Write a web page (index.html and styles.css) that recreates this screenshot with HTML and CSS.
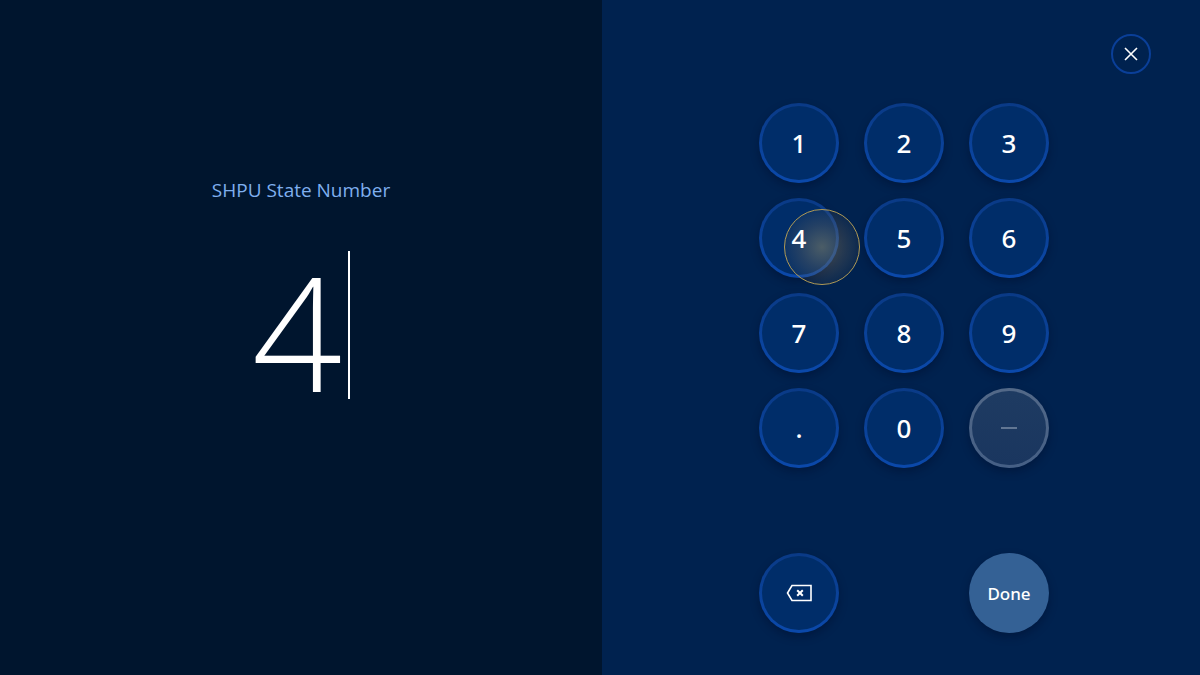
FILE: index.html
```html
<!DOCTYPE html>
<html lang="en">
<head>
    <meta charset="UTF-8">
    <meta name="viewport" content="width=device-width, initial-scale=1.0">
    <title>SHPU State Number</title>
    <link rel="stylesheet" href="styles.css">
</head>
<body>
<main class="screen">
    <section class="entry">
        <label for="stateNumber">SHPU State Number</label>
        <input id="stateNumber" type="text" inputmode="decimal" value="4">
    </section>
    <section class="panel">
        <header class="panel-top">
            <button class="close" type="button" aria-label="Close">
                <svg width="14" height="14" viewBox="0 0 14 14"><path d="M1 1L13 13M13 1L1 13"/></svg>
            </button>
        </header>
        <div class="keypad">
            <button class="key" type="button">1</button>
            <button class="key" type="button">2</button>
            <button class="key" type="button">3</button>
            <button class="key" type="button"><span class="digit">4</span><span class="touch"></span></button>
            <button class="key" type="button">5</button>
            <button class="key" type="button">6</button>
            <button class="key" type="button">7</button>
            <button class="key" type="button">8</button>
            <button class="key" type="button">9</button>
            <button class="key" type="button">.</button>
            <button class="key" type="button">0</button>
            <button class="key" type="button" aria-label="Minus" disabled>
                <svg width="16" height="2" viewBox="0 0 16 2"><path d="M0 1H16"/></svg>
            </button>
        </div>
        <div class="actions">
            <button class="key" type="button" aria-label="Backspace">
                <svg width="26" height="18" viewBox="0 0 26 18">
                    <path d="M6 1.5H25V16.5H6L1.5 9Z"/>
                    <path class="cross" d="M11.2 6.2L16.8 11.8M16.8 6.2L11.2 11.8"/>
                </svg>
            </button>
            <button class="key done" type="button">Done</button>
        </div>
    </section>
</main>
</body>
</html>
```
FILE: styles.css
```css
* {
    box-sizing: border-box;
}
body {
    margin: 0;
    background-color: #00224f;
    font-family: "Noto Sans", "Open Sans", sans-serif;
    color: #fff;
}
.screen {
    display: grid;
    grid-template-columns: 301fr 299fr;
    min-height: 100vh;
}
.entry {
    display: flex;
    flex-direction: column;
    align-items: center;
    padding-top: 176px;
    background-color: #00152e;
}
.entry label {
    font-family: "Open Sans", "Noto Sans", sans-serif;
    font-size: 19px;
    line-height: 28px;
    color: #7fafee;
}
/* the right border is the text cursor */
.entry input {
    width: 98px;
    height: 148px;
    margin-top: 47px;
    padding: 10px 6px 0 0;
    border: 0;
    border-right: 2px solid #fff;
    outline: 0;
    background: none;
    font-family: "Open Sans", "Noto Sans", sans-serif;
    font-size: 158px;
    font-weight: 300;
    line-height: 128px;
    text-align: right;
    color: #fff;
}
.panel {
    padding: 34px 0 42px;
}
.panel-top {
    display: flex;
    justify-content: flex-end;
    padding-right: 49px;
}
button {
    display: flex;
    align-items: center;
    justify-content: center;
    padding: 0;
    border-radius: 50%;
    font-family: inherit;
    color: #fff;
    cursor: pointer;
}
svg {
    fill: none;
    stroke: #fff;
    stroke-width: 1.6;
}
.close {
    width: 40px;
    height: 40px;
    border: 2px solid #0a3f98;
    background-color: #00224f;
}
.keypad,
.actions {
    display: grid;
    grid-template-columns: repeat(3, 80px);
    gap: 15px 25px;
    justify-content: center;
    padding-left: 6px;
}
.keypad {
    margin-top: 29px;
}
.actions {
    margin-top: 85px;
}
.key {
    position: relative;
    width: 80px;
    height: 80px;
    border: 3px solid transparent;
    background: linear-gradient(#002d69, #002d69) padding-box, linear-gradient(#0a3a86, #0b49ab) border-box;
    box-shadow: 0 4px 8px rgba(0, 10, 35, 0.35);
    font-size: 26px;
    font-weight: 500;
}
.key:disabled {
    background: linear-gradient(#1e3b62, #1a365f) padding-box, linear-gradient(#536988, #455f85) border-box;
    cursor: default;
}
.key:disabled svg {
    stroke: #7486a0;
}
.cross {
    stroke-width: 2;
}
.key.done {
    grid-column: 3;
    border: 0;
    background: #346195;
    font-size: 17px;
}
.digit {
    position: relative;
    z-index: 2;
}
/* finger marker over the pressed key */
.touch {
    position: absolute;
    top: 8px;
    left: 22px;
    width: 76px;
    height: 76px;
    border: 1px solid #b09a55;
    border-radius: 50%;
    background: radial-gradient(circle closest-side, rgba(150, 140, 100, 0.5), rgba(120, 110, 90, 0.3) 60%, rgba(110, 100, 80, 0.12));
    pointer-events: none;
    z-index: 1;
}
```
